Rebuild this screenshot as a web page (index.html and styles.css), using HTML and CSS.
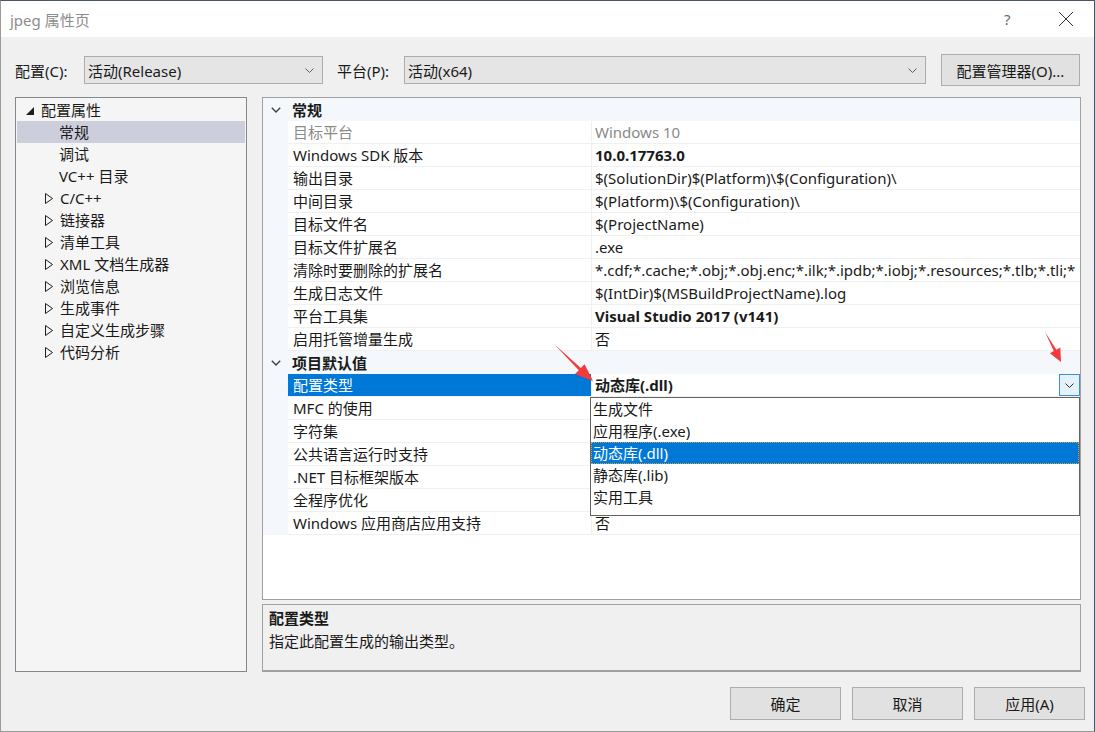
FILE: index.html
```html
<!DOCTYPE html>
<html lang="zh">
<head>
<meta charset="utf-8">
<title>jpeg 属性页</title>
<link rel="stylesheet" href="styles.css">
</head>
<body>
<div class="window">
  <div class="titlebar">
    <span class="title">jpeg 属性页</span>
    <span class="help">?</span>
    <span class="close"><svg width="16" height="16" viewBox="0 0 16 16"><path d="M1 1 L15 15 M15 1 L1 15" stroke="#333" stroke-width="1" fill="none"/></svg></span>
  </div>
  <div class="body">
    <div class="toolbar">
      <span class="lbl">配置(C):</span>
      <div class="combo combo-config"><span>活动(Release)</span><svg class="chev" width="9" height="5" viewBox="0 0 9 5"><path d="M0.5 0.5 L4.5 4.5 L8.5 0.5" stroke="#606060" fill="none"/></svg></div>
      <span class="lbl lbl-plat">平台(P):</span>
      <div class="combo combo-plat"><span>活动(x64)</span><svg class="chev" width="9" height="5" viewBox="0 0 9 5"><path d="M0.5 0.5 L4.5 4.5 L8.5 0.5" stroke="#606060" fill="none"/></svg></div>
      <button class="btn btn-mgr">配置管理器(O)...</button>
    </div>
    <div class="main">
      <div class="tree">
        <div class="node root"><span class="exp"><svg width="8" height="8" viewBox="0 0 8 8"><path d="M8 0 L8 8 L0 8 Z" fill="#1e1e1e"/></svg></span>配置属性</div>
        <div class="node leaf sel">常规</div>
        <div class="node leaf">调试</div>
        <div class="node leaf">VC++ 目录</div>
        <div class="node coll"><span class="exp"><svg width="8" height="11" viewBox="0 0 8 11"><path d="M0.5 0.5 L7.5 5.5 L0.5 10.5 Z" stroke="#1e1e1e" fill="none"/></svg></span>C/C++</div>
        <div class="node coll"><span class="exp"><svg width="8" height="11" viewBox="0 0 8 11"><path d="M0.5 0.5 L7.5 5.5 L0.5 10.5 Z" stroke="#1e1e1e" fill="none"/></svg></span>链接器</div>
        <div class="node coll"><span class="exp"><svg width="8" height="11" viewBox="0 0 8 11"><path d="M0.5 0.5 L7.5 5.5 L0.5 10.5 Z" stroke="#1e1e1e" fill="none"/></svg></span>清单工具</div>
        <div class="node coll"><span class="exp"><svg width="8" height="11" viewBox="0 0 8 11"><path d="M0.5 0.5 L7.5 5.5 L0.5 10.5 Z" stroke="#1e1e1e" fill="none"/></svg></span>XML 文档生成器</div>
        <div class="node coll"><span class="exp"><svg width="8" height="11" viewBox="0 0 8 11"><path d="M0.5 0.5 L7.5 5.5 L0.5 10.5 Z" stroke="#1e1e1e" fill="none"/></svg></span>浏览信息</div>
        <div class="node coll"><span class="exp"><svg width="8" height="11" viewBox="0 0 8 11"><path d="M0.5 0.5 L7.5 5.5 L0.5 10.5 Z" stroke="#1e1e1e" fill="none"/></svg></span>生成事件</div>
        <div class="node coll"><span class="exp"><svg width="8" height="11" viewBox="0 0 8 11"><path d="M0.5 0.5 L7.5 5.5 L0.5 10.5 Z" stroke="#1e1e1e" fill="none"/></svg></span>自定义生成步骤</div>
        <div class="node coll"><span class="exp"><svg width="8" height="11" viewBox="0 0 8 11"><path d="M0.5 0.5 L7.5 5.5 L0.5 10.5 Z" stroke="#1e1e1e" fill="none"/></svg></span>代码分析</div>
      </div>
      <div class="right">
        <div class="grid">
          <div class="cat"><span class="gut"><svg width="10" height="6" viewBox="0 0 10 6"><path d="M0.8 0.8 L5 5 L9.2 0.8" stroke="#404040" stroke-width="1.4" fill="none"/></svg></span><span class="cname">常规</span></div>
          <div class="row dis"><span class="gut"></span><span class="name">目标平台</span><span class="val">Windows 10</span></div>
          <div class="row"><span class="gut"></span><span class="name">Windows SDK 版本</span><span class="val b">10.0.17763.0</span></div>
          <div class="row"><span class="gut"></span><span class="name">输出目录</span><span class="val">$(SolutionDir)$(Platform)\$(Configuration)\</span></div>
          <div class="row"><span class="gut"></span><span class="name">中间目录</span><span class="val">$(Platform)\$(Configuration)\</span></div>
          <div class="row"><span class="gut"></span><span class="name">目标文件名</span><span class="val">$(ProjectName)</span></div>
          <div class="row"><span class="gut"></span><span class="name">目标文件扩展名</span><span class="val">.exe</span></div>
          <div class="row"><span class="gut"></span><span class="name">清除时要删除的扩展名</span><span class="val">*.cdf;*.cache;*.obj;*.obj.enc;*.ilk;*.ipdb;*.iobj;*.resources;*.tlb;*.tli;*</span></div>
          <div class="row"><span class="gut"></span><span class="name">生成日志文件</span><span class="val">$(IntDir)$(MSBuildProjectName).log</span></div>
          <div class="row"><span class="gut"></span><span class="name">平台工具集</span><span class="val b">Visual Studio 2017 (v141)</span></div>
          <div class="row"><span class="gut"></span><span class="name">启用托管增量生成</span><span class="val">否</span></div>
          <div class="cat"><span class="gut"><svg width="10" height="6" viewBox="0 0 10 6"><path d="M0.8 0.8 L5 5 L9.2 0.8" stroke="#404040" stroke-width="1.4" fill="none"/></svg></span><span class="cname">项目默认值</span></div>
          <div class="row active"><span class="gut"></span><span class="name">配置类型</span><span class="val b edit">动态库(.dll)<span class="ddbtn"><svg width="9" height="5" viewBox="0 0 9 5"><path d="M0.5 0.5 L4.5 4.5 L8.5 0.5" stroke="#303030" fill="none"/></svg></span>
            <span class="ddlist">
              <span class="opt">生成文件</span>
              <span class="opt">应用程序(.exe)</span>
              <span class="opt hi">动态库(.dll)</span>
              <span class="opt">静态库(.lib)</span>
              <span class="opt">实用工具</span>
            </span></span></div>
          <div class="row"><span class="gut"></span><span class="name">MFC 的使用</span><span class="val"></span></div>
          <div class="row"><span class="gut"></span><span class="name">字符集</span><span class="val"></span></div>
          <div class="row"><span class="gut"></span><span class="name">公共语言运行时支持</span><span class="val"></span></div>
          <div class="row"><span class="gut"></span><span class="name">.NET 目标框架版本</span><span class="val"></span></div>
          <div class="row"><span class="gut"></span><span class="name">全程序优化</span><span class="val"></span></div>
          <div class="row"><span class="gut"></span><span class="name">Windows 应用商店应用支持</span><span class="val">否</span></div>
        </div>
        <div class="desc">
          <div class="dtitle">配置类型</div>
          <div class="dtext">指定此配置生成的输出类型。</div>
        </div>
      </div>
    </div>
    <div class="buttons">
      <button class="btn dlg">确定</button>
      <button class="btn dlg">取消</button>
      <button class="btn dlg">应用(A)</button>
    </div>
  </div>
  <svg class="annot" width="1095" height="732" viewBox="0 0 1095 732">
    <polygon points="554,344 580.8,368 584.6,364.2 593,381 575,374 578.8,370.2" fill="#f23b3b"/>
    <polygon points="1045,332 1056.4,349.7 1060.3,347.6 1061,362 1049.9,353.2 1053.8,351.1" fill="#f23b3b"/>
  </svg>
</div>
</body>
</html>
```
FILE: styles.css
```css
* { box-sizing: border-box; }
html, body { margin: 0; padding: 0; }
body {
  width: 1095px;
  height: 732px;
  overflow: hidden;
  font-family: "Noto Sans", "Noto Sans CJK SC", sans-serif;
  font-size: 15px;
  color: #1a1a1a;
  background: #f0f0f0;
}
.window {
  position: relative;
  width: 1095px;
  height: 732px;
  border-left: 1px solid #9a9a9a;
  border-right: 1px solid #4a5563;
  border-top: 1px solid #4a5563;
  border-bottom: 1px solid #9a9a9a;
  background: #f0f0f0;
  display: flex;
  flex-direction: column;
}
.titlebar {
  height: 36px;
  background: #fff;
  display: flex;
  align-items: center;
  padding-left: 9px;
  flex-shrink: 0;
}
.title { color: #8c8c8c; font-size: 15px; flex: 1; }
.help { color: #6a6a6a; font-size: 15px; width: 16px; margin-right: 38px; }
.close { width: 16px; height: 16px; margin-right: 20px; display: flex; }
.body {
  flex: 1;
  display: flex;
  flex-direction: column;
  padding: 17px 13px 0 14px;
}
.toolbar {
  height: 32px;
  display: flex;
  align-items: center;
}
.lbl { width: 69px; white-space: nowrap; }
.lbl-plat { width: 67px; margin-left: 14px; }
.combo {
  height: 28px;
  background: #e5e5e5;
  border: 1px solid #acacac;
  display: flex;
  align-items: center;
  justify-content: space-between;
  padding: 0 8px 0 3px;
}
.combo-config { width: 239px; }
.combo-plat { width: 522px; }
.chev { display: block; }
.btn {
  font-family: inherit;
  font-size: 15px;
  color: #1a1a1a;
  background: #e1e1e1;
  border: 1px solid #adadad;
  padding: 0;
}
.btn-mgr { width: 139px; height: 32px; margin-left: 15px; }
.main {
  display: flex;
  margin-top: 11px;
  height: 575px;
}
.tree {
  width: 232px;
  background: #f5f5f5;
  border: 1px solid #828790;
  padding: 1px;
}
.node {
  height: 22px;
  line-height: 22px;
  white-space: nowrap;
  display: flex;
  align-items: center;
}
.root { padding-left: 9px; }
.root .exp { width: 15px; display: flex; padding-top: 1px; }
.leaf { padding-left: 42px; }
.sel { background: #cccedb; }
.coll { padding-left: 28px; }
.coll .exp { width: 15px; display: flex; }
.right {
  flex: 1;
  margin-left: 15px;
  display: flex;
  flex-direction: column;
  width: 819px;
}
.grid {
  height: 503px;
  background: #fff;
  border: 1px solid #a0a0a0;
  overflow: hidden;
}
.cat, .row {
  height: 23px;
  display: flex;
  align-items: stretch;
  white-space: nowrap;
}
.cat { background: #f4f7fb; }
.gut {
  width: 25px;
  flex-shrink: 0;
  background: #f4f7fb;
  display: flex;
  align-items: center;
  padding-left: 8px;
}
.cname { font-weight: bold; line-height: 23px; padding-left: 4px; padding-top: 1px; }
.name {
  width: 304px;
  flex-shrink: 0;
  padding-left: 5px;
  padding-top: 1px;
  line-height: 21px;
  border-bottom: 1px solid #eef0f4;
  border-right: 1px solid #eef0f4;
  overflow: hidden;
}
.val {
  flex: 1;
  min-width: 0;
  padding-left: 3px;
  padding-top: 1px;
  line-height: 21px;
  border-bottom: 1px solid #eef0f4;
  overflow: hidden;
}
.b { font-weight: bold; }
.dis .name, .dis .val { color: #8a8a8a; }
.active .name { background: #0078d7; color: #fff; }
.edit {
  position: relative;
  overflow: visible;
  padding-right: 0;
}
.ddbtn {
  position: absolute;
  right: 0;
  top: 0;
  width: 21px;
  height: 22px;
  border: 1px solid #3c8fdc;
  background: #e5f1fb;
  display: flex;
  align-items: center;
  justify-content: center;
}
.ddlist {
  position: absolute;
  left: -2px;
  right: 0;
  top: 23px;
  height: 119px;
  background: #fff;
  border: 1px solid #646464;
  display: flex;
  flex-direction: column;
  font-weight: normal;
  z-index: 2;
}
.opt {
  height: 22px;
  line-height: 22px;
  padding-left: 2px;
  color: #1a1a1a;
}
.opt.hi { background: #0078d7; color: #fff; outline: 1px dotted #d0a040; outline-offset: -1px; }
.desc {
  margin-top: 4px;
  height: 68px;
  background: #f0f0f0;
  border: 1px solid #a0a0a0;
  border-bottom: 2px solid #a0a0a0;
  padding: 2px 6px;
}
.dtitle { font-weight: bold; line-height: 22px; }
.dtext { line-height: 24px; }
.buttons {
  display: flex;
  justify-content: flex-end;
  gap: 11px;
  margin-top: 15px;
  margin-right: -4px;
}
.dlg { width: 111px; height: 33px; }
.annot {
  position: absolute;
  left: -1px;
  top: -1px;
  pointer-events: none;
  z-index: 5;
}
```
